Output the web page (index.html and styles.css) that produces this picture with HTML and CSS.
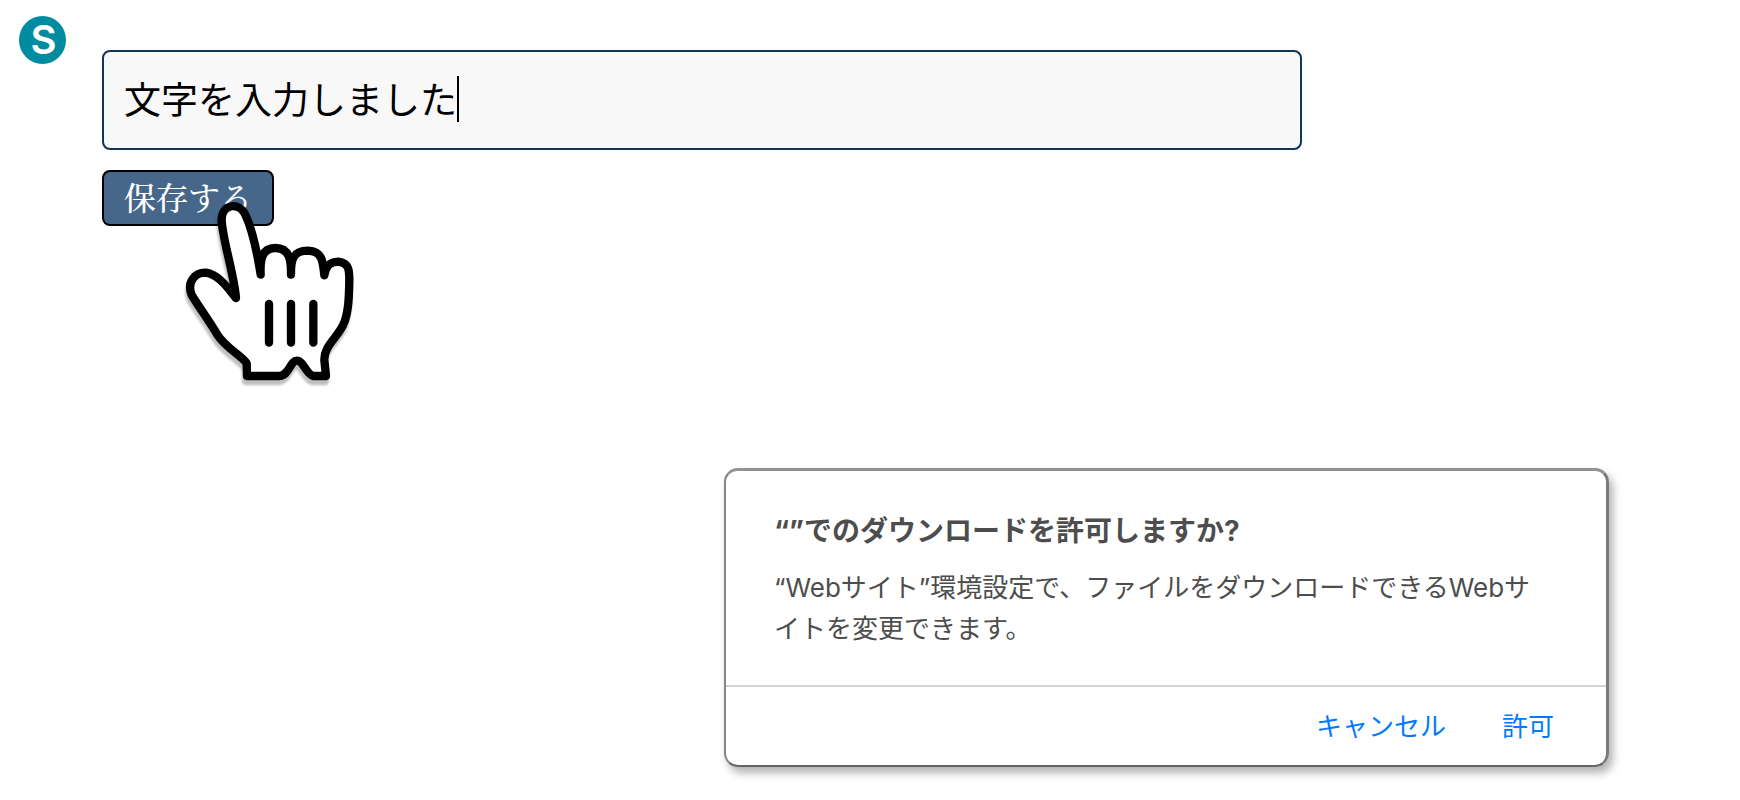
FILE: index.html
```html
<!DOCTYPE html>
<html lang="ja">
<head>
    <meta charset="UTF-8">
    <meta content="width=device-width, initial-scale=1.0" name="viewport">
    <title>文字を保存する</title>
    <link rel="stylesheet" href="styles.css">
</head>
<body>
<main class="page">
    <div class="badge">S</div>
    <form class="editor">
        <label class="field">
            <input class="field-input" name="text" type="text" value="文字を入力しました" aria-label="文字">
            <span class="caret"></span>
        </label>
        <div class="save">
            <button class="save-btn" type="button">保存する</button>
            <svg class="pointer" viewBox="0 0 600 660" aria-hidden="true">
                <path class="pointer-hand" d="M198 354 C192 280 155 170 155 118 C157 70 208 66 226 104 C246 146 258 196 272 284 C270 240 275 204 316 204 C358 204 364 240 363 284 C362 240 368 212 414 212 C456 214 459 242 463 286 C466 262 476 246 505 245 C538 248 538 274 538 300 C537 350 536 390 524 424 C508 470 462 494 463 540 L468 588 L430 588 C408 582 400 542 381 542 C360 542 358 588 326 588 L231 588 L230 550 C218 530 166 502 142 464 C116 420 90 386 65 345 C50 306 74 277 108 278 C146 284 172 322 198 354 Z"/>
                <path class="pointer-line" d="M297 372 V488 M363 372 V488 M430 372 V488"/>
            </svg>
        </div>
    </form>
</main>
<section class="dialog" role="dialog" aria-labelledby="dialog-title">
    <div class="dialog-body">
        <h1 class="dialog-title" id="dialog-title">“”でのダウンロードを許可しますか?</h1>
        <p class="dialog-text">“Webサイト”環境設定で、ファイルをダウンロードできるWebサイトを変更できます。</p>
    </div>
    <div class="dialog-actions">
        <button class="dialog-btn" type="button">キャンセル</button>
        <button class="dialog-btn" type="button">許可</button>
    </div>
</section>
</body>
</html>
```

FILE: styles.css
```css
* {
    box-sizing: border-box;
}

body {
    min-height: 100vh;
    font-family: Inter, "Noto Sans CJK JP", sans-serif;
    margin: 0;
    background: #fff;
    color: #000;
}

.page {
    display: flex;
    align-items: flex-start;
    gap: 36px;
    padding: 16px 19px 0;
}

.badge {
    display: flex;
    flex: none;
    align-items: center;
    justify-content: center;
    width: 47px;
    height: 48px;
    padding-left: 2px;
    border-radius: 50%;
    background: #008ca0;
    color: #fff;
    font-size: 40px;
    font-weight: 600;
    line-height: 48px;
}

.editor {
    flex: 0 1 1200px;
    padding-top: 34px;
}

.field {
    display: flex;
    align-items: center;
    height: 100px;
    padding: 0 20px 2px;
    border: 2px solid #12355b;
    border-radius: 8px;
    background: #f8f8f8;
}

.field-input {
    field-sizing: content;
    padding: 0 0 2px;
    border: 0;
    outline: 0;
    background: none;
    font-family: "Noto Sans CJK JP", sans-serif;
    font-size: 37px;
}

.caret {
    width: 2px;
    height: 46px;
    background: #000;
}

.save {
    position: relative;
    width: fit-content;
    margin-top: 20px;
}

.save-btn {
    display: block;
    height: 56px;
    padding: 0 20px 4px;
    border: 2px solid #000;
    border-radius: 8px;
    background: #46678a;
    color: #fff;
    font-family: "Noto Serif CJK JP", "Noto Sans CJK JP", serif;
    font-size: 32px;
    font-weight: 500;
    line-height: 48px;
}

/* hand pointer over the save button */
.pointer {
    position: absolute;
    top: 10px;
    left: 68px;
    width: 200px;
    height: 220px;
    filter: drop-shadow(-1px 5px 1px rgba(0, 0, 0, 0.25));
}

.pointer-hand {
    fill: #fff;
    stroke: #000;
    stroke-width: 25;
    stroke-linejoin: round;
}

.pointer-line {
    fill: none;
    stroke: #000;
    stroke-width: 25;
    stroke-linecap: round;
}

.dialog {
    max-width: 885px;
    margin: 242px 131px 0 auto;
    border-style: solid;
    border-width: 3px 3px 2px 2px;
    border-color: #929292 #7b7b7b #666 #858585;
    border-radius: 14px;
    box-shadow: 4px 6px 8px rgba(0, 0, 0, 0.3);
    color: #4d4d4d;
}

.dialog-body {
    padding: 40px 60px 36px 48px;
    border-bottom: 2px solid #d4d4d4;
}

.dialog-title {
    margin: 0 0 16px;
    font-size: 28px;
    font-weight: 700;
    line-height: 40px;
}

.dialog-text {
    margin: 0;
    font-size: 26px;
    font-weight: 400;
    line-height: 41px;
}

.dialog-actions {
    display: flex;
    justify-content: flex-end;
    gap: 56px;
    padding: 20px 52px 18px;
}

.dialog-btn {
    padding: 0;
    border: 0;
    background: none;
    color: #007aff;
    font-family: inherit;
    font-size: 26px;
    line-height: 40px;
}
```
